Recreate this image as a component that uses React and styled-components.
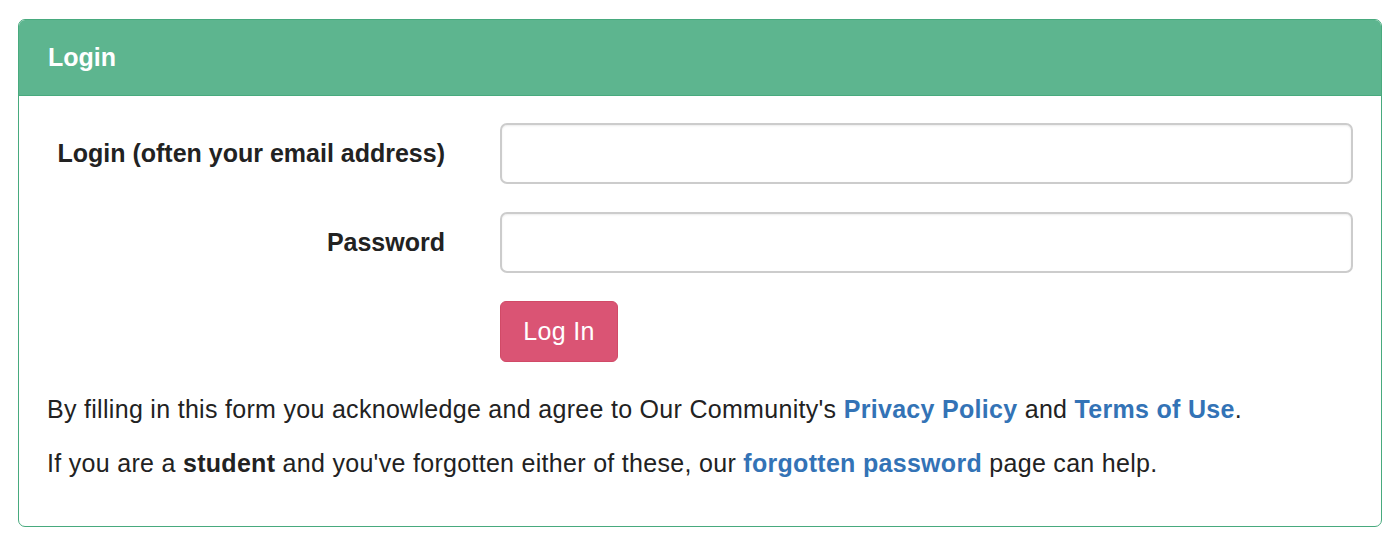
import React from "react";
import styled, { createGlobalStyle } from "styled-components";

const Global = createGlobalStyle`
  html, body { margin: 0; padding: 0; background: #fff; }
  body {
    font-family: "Liberation Sans", Arial, sans-serif;
    color: #222;
  }
  * { box-sizing: border-box; }
`;

const Page = styled.div`
  padding: 19px 17px 0 18px;
`;

const Panel = styled.section`
  border: 1.5px solid #48aa7e;
  border-radius: 7px;
  overflow: hidden;
  background: #fff;
`;

const Heading = styled.header`
  background: #5db58f;
  color: #fff;
  height: 76px;
  padding: 0 29px;
  display: flex;
  align-items: center;
  font-size: 25px;
  font-weight: bold;
  border-bottom: 1px solid #48aa7e;
`;

const Body = styled.div`
  padding: 27px 28px 46px 28px;
`;

const Form = styled.form`
  display: grid;
  grid-template-columns: 398px 1fr;
  column-gap: 55px;
  row-gap: 28px;
  align-items: center;
`;

const Label = styled.label`
  text-align: right;
  font-size: 25px;
  font-weight: bold;
  color: #222;
`;

const Input = styled.input`
  display: block;
  width: 100%;
  height: 61px;
  border: 2px solid #ccc;
  border-radius: 7px;
  box-shadow: inset 0 1px 2px rgba(0, 0, 0, 0.08);
  font-size: 24px;
  padding: 0 18px;
  font-family: inherit;
  outline: none;
`;

const Button = styled.button`
  grid-column: 2;
  justify-self: start;
  height: 61px;
  width: 118px;
  border: 1px solid #d14a67;
  border-radius: 6px;
  background: #da5474;
  color: #fff;
  font-family: inherit;
  font-size: 25px;
  letter-spacing: 0.3px;
  padding: 0;
  cursor: pointer;
`;

const Note = styled.p`
  margin: ${(p) => (p.$first ? "30px" : "20px")} 0 0 0;
  font-size: 25px;
  letter-spacing: 0.3px;
  line-height: 34px;
  color: #222;
`;

const Link = styled.a`
  color: #3373b6;
  font-weight: bold;
  text-decoration: none;
`;

export default function App() {
  return (
    <>
      <Global />
      <Page>
        <Panel>
          <Heading>Login</Heading>
          <Body>
            <Form onSubmit={(e) => e.preventDefault()}>
              <Label htmlFor="login">Login (often your email address)</Label>
              <Input id="login" type="text" />
              <Label htmlFor="password">Password</Label>
              <Input id="password" type="password" />
              <Button type="submit">Log In</Button>
            </Form>
            <Note $first>
              By filling in this form you acknowledge and agree to Our Community's{" "}
              <Link href="#">Privacy Policy</Link> and <Link href="#">Terms of Use</Link>.
            </Note>
            <Note>
              If you are a <strong>student</strong> and you've forgotten either of these, our{" "}
              <Link href="#">forgotten password</Link> page can help.
            </Note>
          </Body>
        </Panel>
      </Page>
    </>
  );
}
